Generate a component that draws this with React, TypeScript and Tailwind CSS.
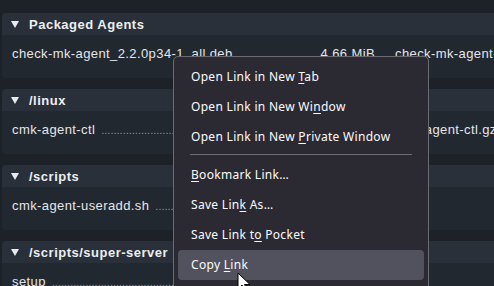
import React from 'react';

type Row = { name: string; size?: string; file?: string };
type Section = { title: string; rows: Row[] };

const sections: Section[] = [
  {
    title: 'Packaged Agents',
    rows: [{ name: 'check-mk-agent_2.2.0p34-1_all.deb', size: '4.66 MiB', file: 'check-mk-agent-2.2.0p34-1.noarch.rpm' }],
  },
  { title: '/linux', rows: [{ name: 'cmk-agent-ctl', size: '1.62 MiB', file: 'cmk-agent-ctl.gz' }] },
  { title: '/scripts', rows: [{ name: 'cmk-agent-useradd.sh' }] },
  { title: '/scripts/super-server', rows: [{ name: 'setup' }] },
];

// label parts: [before, accessKey, after]
const menuItems: ([string, string, string] | 'sep')[] = [
  ['Open Link in New ', 'T', 'ab'],
  ['Open Link in New Wi', 'n', 'dow'],
  ['Open Link in New ', 'P', 'rivate Window'],
  'sep',
  ['', 'B', 'ookmark Link…'],
  ['Save Lin', 'k', ' As…'],
  ['Save Link t', 'o', ' Pocket'],
  ['Copy ', 'L', 'ink'],
];

function Triangle() {
  return (
    <svg width="8" height="7" viewBox="0 0 8 7" className="shrink-0">
      <polygon points="0,0 8,0 4,7" fill="#e8eaed" />
    </svg>
  );
}

function Panel({ section }: { section: Section }) {
  return (
    <div className="w-[540px] shrink-0 overflow-hidden rounded-[4px]">
      <div className="flex h-[22px] items-center gap-[10px] bg-[#29303a] pl-[9px] pt-[1px]">
        <Triangle />
        <span className="text-[13px] font-bold tracking-[0.5px] text-[#eceef1]">{section.title}</span>
      </div>
      <div className="h-[43px] bg-[#222830] pl-[10px] pt-[10px]">
        {section.rows.map((r) => (
          <div key={r.name} className="flex h-[18px] items-baseline text-[13px] leading-[18px] tracking-[0.4px] text-[#e4e6e9]">
            <div className="flex w-[363px] shrink-0 items-baseline">
              <span className="shrink-0">{r.name}</span>
              <span className="mx-[6px] flex-1 overflow-hidden whitespace-nowrap text-[11px] tracking-[0px] text-[#8d939b]">
                {'.'.repeat(120)}
              </span>
              {r.size && <span className="shrink-0">{r.size}</span>}
            </div>
            {r.file && <span className="ml-[20px] whitespace-nowrap">{r.file}</span>}
          </div>
        ))}
      </div>
    </div>
  );
}

function ContextMenu() {
  return (
    <div className="absolute left-[173px] top-[56px] w-[256px] rounded-t-[5px] border border-[#6c6b74] bg-[#2b2a33] px-[4px] pb-[10px] pt-[5px] font-['Noto_Sans','Open_Sans',sans-serif] text-[12px] tracking-[0.3px] text-[#fbfbfe]">
      {menuItems.map((it, i) =>
        it === 'sep' ? (
          <div key={i} className="px-[12px] pb-[5px] pt-[2px]">
            <div className="h-px w-full bg-[#6c6b74]" />
          </div>
        ) : (
          <div
            key={i}
            className={`flex h-[30px] items-center rounded-[4px] pl-[13px] ${i === 7 ? 'bg-[#52525e]' : ''}`}
          >
            <span>
              {it[0]}
              <span className="underline underline-offset-[2px]">{it[1]}</span>
              {it[2]}
            </span>
          </div>
        ),
      )}
    </div>
  );
}

function Cursor() {
  return (
    <svg className="absolute left-[237px] top-[272px]" width="14" height="22" viewBox="0 0 14 22">
      <path d="M1 1 L1 17 L5 13 L8 20 L10.5 19 L7.5 12.5 L13 12.5 Z" fill="#ffffff" stroke="#000000" strokeWidth="1" strokeLinejoin="round" />
    </svg>
  );
}

export default function App() {
  return (
    <div className="relative h-[286px] w-[494px] overflow-hidden bg-[#1d2128] font-['Liberation_Sans',Arial,sans-serif]">
      <div className="flex flex-col gap-[11px] pl-[2px] pt-[13px]">
        {sections.map((s) => (
          <Panel key={s.title} section={s} />
        ))}
      </div>
      <ContextMenu />
      <Cursor />
    </div>
  );
}
